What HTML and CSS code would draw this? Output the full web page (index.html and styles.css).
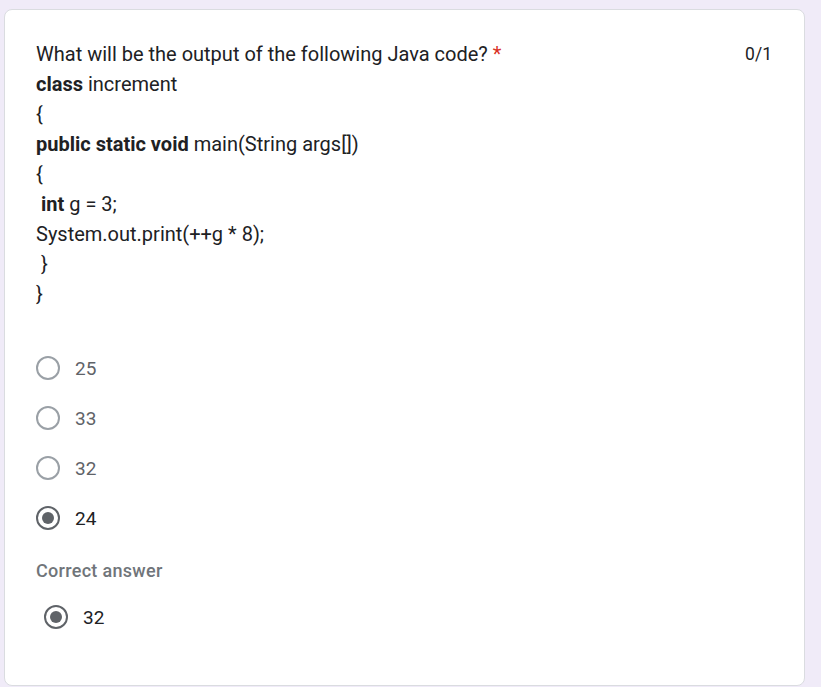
FILE: index.html
```html
<!DOCTYPE html>
<html>
<head>
<meta charset="utf-8">
<link rel="stylesheet" href="styles.css">
</head>
<body>
<div class="card">
  <div class="header">
    <div class="question">
      <div class="line">What will be the output of the following Java code? <span class="req">*</span></div>
      <div class="line"><b>class</b> increment</div>
      <div class="line">{</div>
      <div class="line"><b>public static void</b> main(String args[])</div>
      <div class="line">{</div>
      <div class="line">&nbsp;<b>int</b> g = 3;</div>
      <div class="line">System.out.print(++g * 8);</div>
      <div class="line">&nbsp;}</div>
      <div class="line">}</div>
    </div>
    <div class="score">0/1</div>
  </div>
  <div class="options">
    <div class="option"><span class="radio"></span><span class="label">25</span></div>
    <div class="option"><span class="radio"></span><span class="label">33</span></div>
    <div class="option"><span class="radio"></span><span class="label">32</span></div>
    <div class="option selected"><span class="radio"></span><span class="label">24</span></div>
  </div>
  <div class="correct">
    <div class="correct-title">Correct answer</div>
    <div class="option selected correct-opt"><span class="radio"></span><span class="label">32</span></div>
  </div>
</div>
</body>
</html>
```
FILE: styles.css
```css
html, body {
  margin: 0;
  padding: 0;
}
body {
  background: #f0ebf8;
  padding: 9px 16px 0 4px;
  font-family: Roboto, "Liberation Sans", sans-serif;
  color: #202124;
  overflow: hidden;
}
.card {
  box-sizing: border-box;
  background: #fff;
  border: 1px solid #dadce0;
  border-radius: 8px;
  padding: 29px 32px 20px 31px;
  height: 677px;
}
.header {
  display: flex;
  justify-content: space-between;
  align-items: flex-start;
}
.question {
  font-size: 20px;
  line-height: 30px;
  letter-spacing: 0;
}
.question b {
  font-weight: 700;
}
.req {
  color: #d93025;
}
.score {
  font-size: 17.5px;
  line-height: 30px;
}
.options {
  margin-top: 34px;
  display: flex;
  flex-direction: column;
}
.option {
  display: flex;
  align-items: center;
  height: 50px;
}
.radio {
  box-sizing: border-box;
  width: 24px;
  height: 24px;
  border: 2px solid #9aa0a6;
  border-radius: 50%;
  display: flex;
  align-items: center;
  justify-content: center;
  flex: none;
}
.label {
  margin-left: 15px;
  font-size: 19px;
  color: #5f6368;
}
.option.selected .radio {
  border-color: #5f6368;
}
.option.selected .radio::after {
  content: "";
  width: 12px;
  height: 12px;
  border-radius: 50%;
  background: #5f6368;
}
.option.selected .label {
  color: #202124;
}
.correct {
  margin-top: 16px;
}
.correct-title {
  font-size: 18px;
  font-weight: 500;
  color: #70757a;
  line-height: 24px;
  letter-spacing: 0.3px;
}
.correct-opt {
  margin-top: 12px;
  padding-left: 8px;
  height: 44px;
}
.correct-opt .label {
  margin-left: 15px;
}
```
